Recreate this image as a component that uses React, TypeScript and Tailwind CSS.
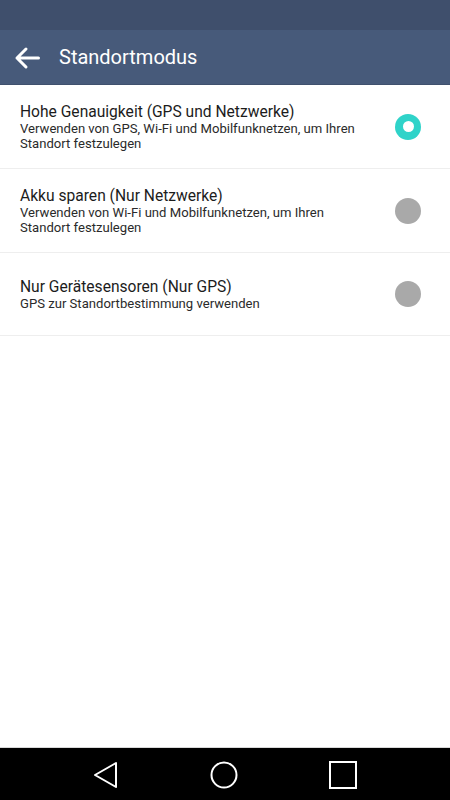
import React from "react";

const options = [
  {
    title: "Hohe Genauigkeit (GPS und Netzwerke)",
    desc: "Verwenden von GPS, Wi-Fi und Mobilfunknetzen, um Ihren Standort festzulegen",
    selected: true,
  },
  {
    title: "Akku sparen (Nur Netzwerke)",
    desc: "Verwenden von Wi-Fi und Mobilfunknetzen, um Ihren Standort festzulegen",
    selected: false,
  },
  {
    title: "Nur Gerätesensoren (Nur GPS)",
    desc: "GPS zur Standortbestimmung verwenden",
    selected: false,
  },
];

function Radio({ on }: { on: boolean }) {
  if (on) {
    return (
      <div className="w-[26px] h-[26px] shrink-0 rounded-full bg-[#2fd3c9] flex items-center justify-center">
        <div className="w-[11px] h-[11px] rounded-full bg-white" />
      </div>
    );
  }
  return <div className="w-[26px] h-[26px] shrink-0 rounded-full bg-[#a9a9a9]" />;
}

export default function App() {
  return (
    <div className="w-[450px] h-[800px] flex flex-col bg-white font-['Roboto',sans-serif]">
      {/* status bar */}
      <div className="h-[30px] bg-[#3f4f6c]" />

      {/* toolbar */}
      <div className="h-[55px] bg-[#475a7a] flex items-center border-b border-[#3f506d]">
        <svg width="28" height="28" viewBox="0 0 28 28" className="ml-[13px] mt-[2px]">
          <path
            d="M4 14 H25.5 M13 5 L4 14 L13 23"
            fill="none"
            stroke="white"
            strokeWidth="3"
            strokeLinecap="round"
            strokeLinejoin="round"
          />
        </svg>
        <span className="ml-[18px] text-[20px] text-white leading-none">Standortmodus</span>
      </div>

      {/* list */}
      <div className="flex flex-col">
        {options.map((o) => (
          <div
            key={o.title}
            className="min-h-[83px] pl-[20px] pr-[29px] py-[17px] flex items-center gap-[35px] border-b border-[#eeeeee]"
          >
            <div className="flex-1 min-w-0">
              <div className="text-[15.6px] leading-[20px] text-[#1c1c1c]">{o.title}</div>
              <div className="text-[13.1px] leading-[14.5px] text-[#2a2a2a]">{o.desc}</div>
            </div>
            <Radio on={o.selected} />
          </div>
        ))}
      </div>

      <div className="flex-1" />

      {/* nav bar */}
      <div className="h-[53px] bg-black border-t border-[#d8d8d8] flex items-center justify-center">
        <div className="flex items-center w-[264px] justify-between pt-[1px]">
          <svg width="26" height="28" viewBox="0 0 26 28">
            <path d="M23 2 L2 14 L23 26 Z" fill="none" stroke="white" strokeWidth="2" strokeLinejoin="round" />
          </svg>
          <svg width="28" height="28" viewBox="0 0 28 28">
            <circle cx="14" cy="14" r="12.5" fill="none" stroke="white" strokeWidth="2" />
          </svg>
          <svg width="28" height="28" viewBox="0 0 28 28">
            <rect x="1" y="1" width="26" height="26" fill="none" stroke="white" strokeWidth="2" />
          </svg>
        </div>
      </div>
    </div>
  );
}
